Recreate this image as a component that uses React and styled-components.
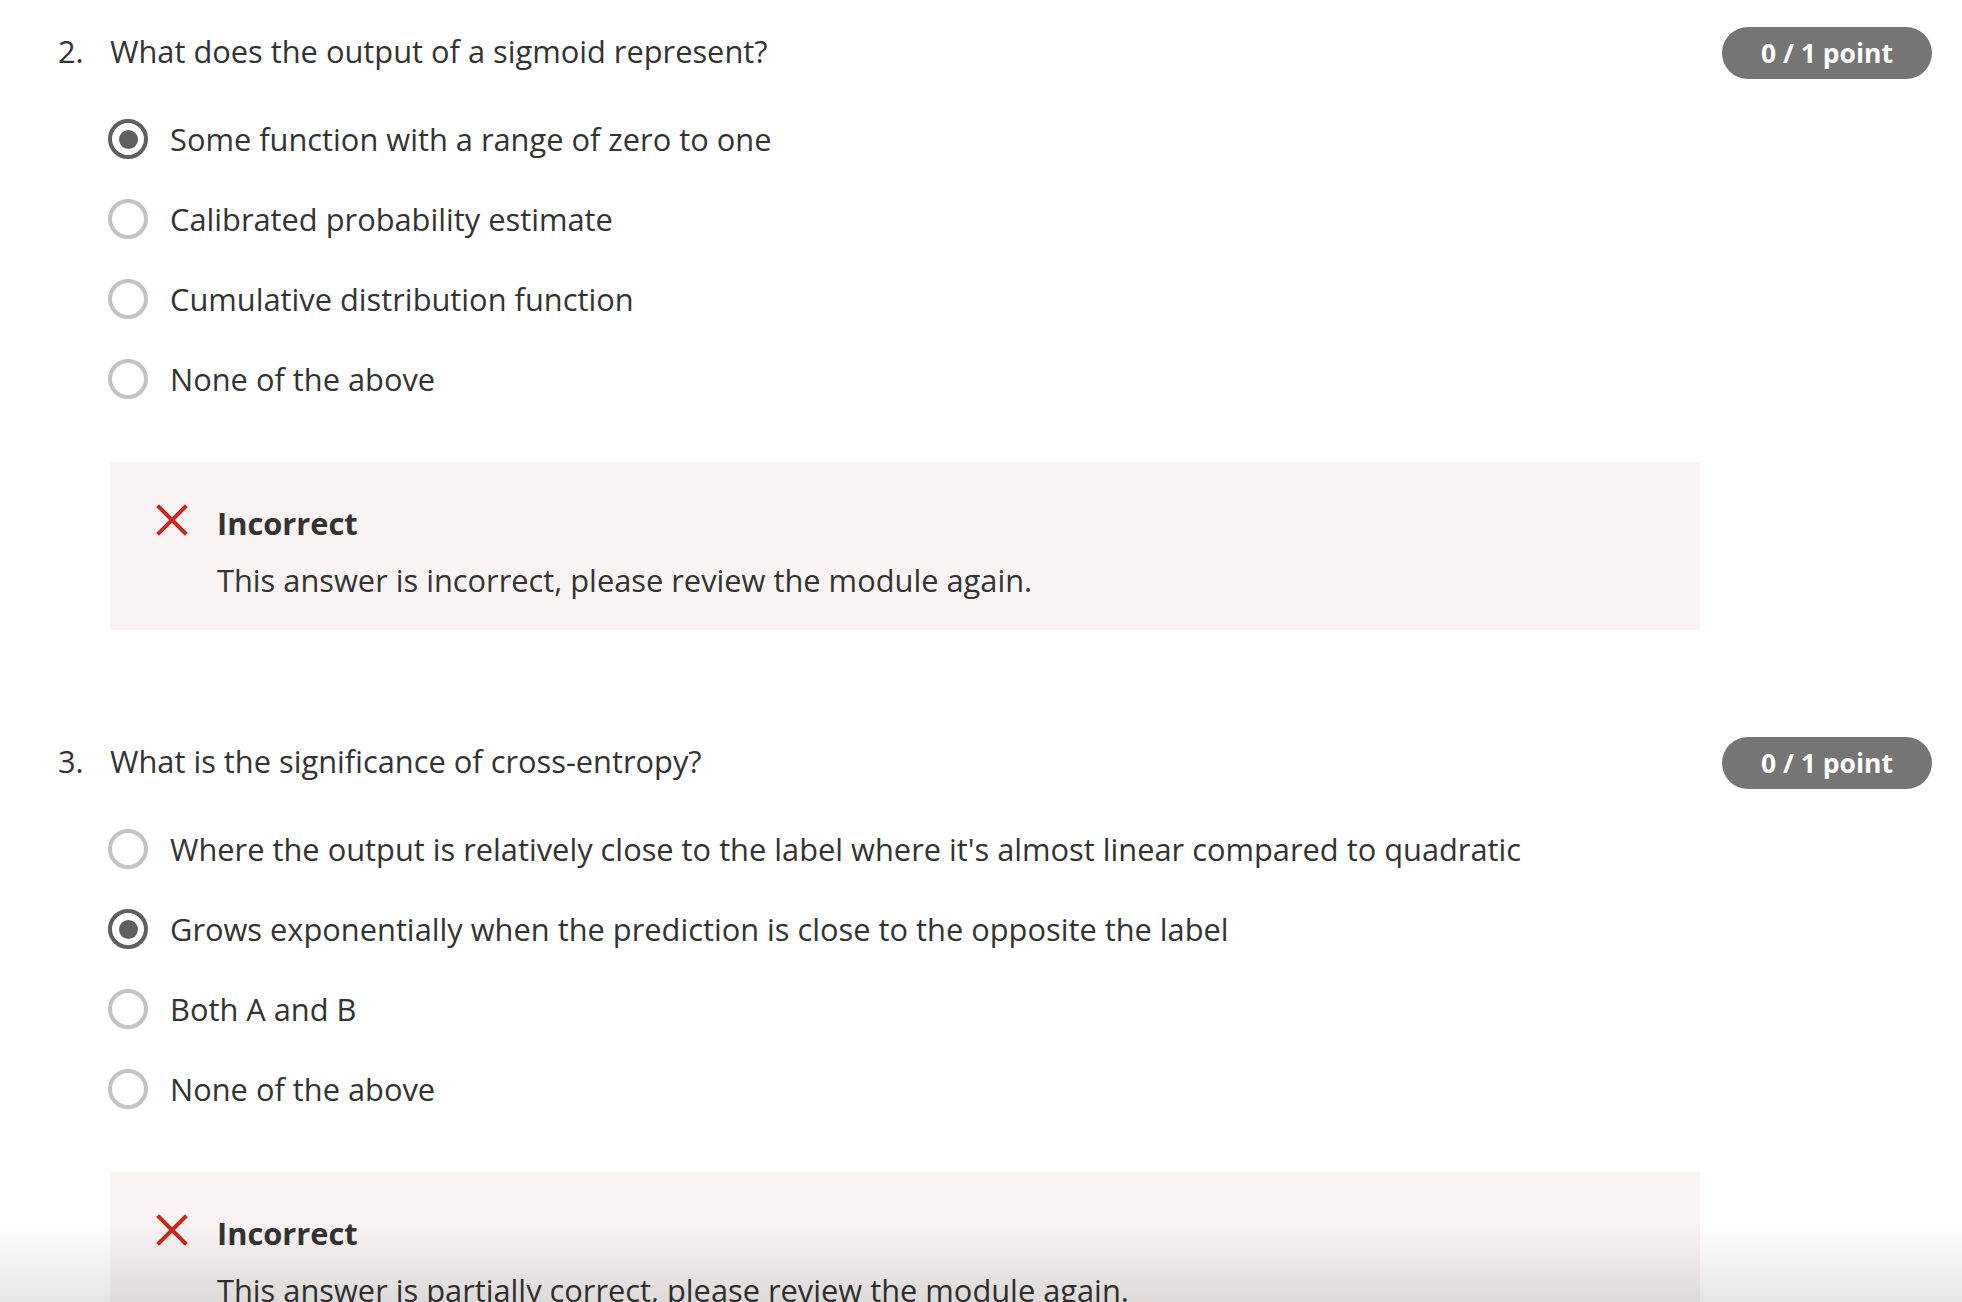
import styled, { createGlobalStyle } from 'styled-components';

const GlobalStyle = createGlobalStyle`
  body {
    margin: 0;
    background: #ffffff;
    font-family: "Open Sans", "Liberation Sans", sans-serif;
    color: #333333;
  }
`;

const Page = styled.main`
  display: flex;
  flex-direction: column;
  gap: 107px;
  padding: 27px 30px 0 58px;
`;

const Question = styled.section`
  display: grid;
  grid-template-columns: 52px 1590px 1fr;
  row-gap: 20px;
`;

const Number = styled.span`
  margin-top: 4px;
  font-size: 30.8px;
  line-height: 40px;
  color: #333333;
`;

const Prompt = styled.h2`
  margin: 4px 0 0;
  font-size: 30.8px;
  font-weight: 400;
  line-height: 40px;
  color: #333333;
`;

const Badge = styled.span`
  justify-self: end;
  display: inline-flex;
  align-items: center;
  height: 52px;
  padding: 0 39px;
  border-radius: 26px;
  background: #757575;
  color: #ffffff;
  font-size: 26.5px;
  font-weight: 700;
  white-space: nowrap;
`;

const Body = styled.div`
  grid-column: 2;
  display: flex;
  flex-direction: column;
  gap: 43px;
`;

const Options = styled.div`
  display: flex;
  flex-direction: column;
`;

const Option = styled.label`
  display: flex;
  align-items: center;
  gap: 22px;
  height: 80px;
  margin-left: -2px;
  font-size: 30.8px;
  color: #333333;
`;

const Radio = styled.span`
  box-sizing: border-box;
  flex: none;
  display: flex;
  align-items: center;
  justify-content: center;
  width: 40px;
  height: 40px;
  border-radius: 50%;
  border: 4px solid ${(p) => (p.$checked ? '#5f5f5f' : '#c2c2c2')};

  &::after {
    content: '';
    display: ${(p) => (p.$checked ? 'block' : 'none')};
    width: 19px;
    height: 19px;
    border-radius: 50%;
    background: #5f5f5f;
  }
`;

const Feedback = styled.div`
  display: grid;
  grid-template-columns: 32px 1fr;
  column-gap: 29px;
  row-gap: 17px;
  padding: 41px 46px 30px;
  background: #f9f3f3;
`;

const Verdict = styled.strong`
  grid-column: 2;
  font-size: 30.8px;
  font-weight: 700;
  line-height: 40px;
  color: #333333;
`;

const Explanation = styled.p`
  grid-column: 2;
  margin: 0;
  font-size: 30.8px;
  line-height: 40px;
  color: #333333;
`;

const CrossIcon = styled.svg`
  grid-column: 1;
  grid-row: 1;
  margin-top: 1px;
  width: 32px;
  height: 32px;
`;

const BottomShade = styled.div`
  position: fixed;
  left: 0;
  right: 0;
  bottom: 0;
  height: 80px;
  pointer-events: none;
  background: linear-gradient(to bottom, rgba(0, 0, 0, 0), rgba(0, 0, 0, 0.1));
`;

const questions = [
  {
    num: '2.',
    prompt: 'What does the output of a sigmoid represent?',
    options: [
      'Some function with a range of zero to one',
      'Calibrated probability estimate',
      'Cumulative distribution function',
      'None of the above',
    ],
    picked: 0,
    note: 'This answer is incorrect, please review the module again.',
  },
  {
    num: '3.',
    prompt: 'What is the significance of cross-entropy?',
    options: [
      "Where the output is relatively close to the label where it's almost linear compared to quadratic",
      'Grows exponentially when the prediction is close to the opposite the label',
      'Both A and B',
      'None of the above',
    ],
    picked: 1,
    note: 'This answer is partially correct, please review the module again.',
  },
];

const Cross = () => (
  <CrossIcon viewBox="0 0 32 32">
    <path d="M3 3 L29 29 M29 3 L3 29" stroke="#c8281d" strokeWidth="4" strokeLinecap="square" fill="none" />
  </CrossIcon>
);

const App = () => (
  <>
    <GlobalStyle />
    <Page>
      {questions.map((q) => (
        <Question key={q.num}>
          <Number>{q.num}</Number>
          <Prompt>{q.prompt}</Prompt>
          <Badge>0 / 1 point</Badge>
          <Body>
            <Options>
              {q.options.map((opt, i) => (
                <Option key={opt}>
                  <Radio $checked={i === q.picked} />
                  {opt}
                </Option>
              ))}
            </Options>
            <Feedback>
              <Cross />
              <Verdict>Incorrect</Verdict>
              <Explanation>{q.note}</Explanation>
            </Feedback>
          </Body>
        </Question>
      ))}
    </Page>
    <BottomShade />
  </>
);

export default App;
